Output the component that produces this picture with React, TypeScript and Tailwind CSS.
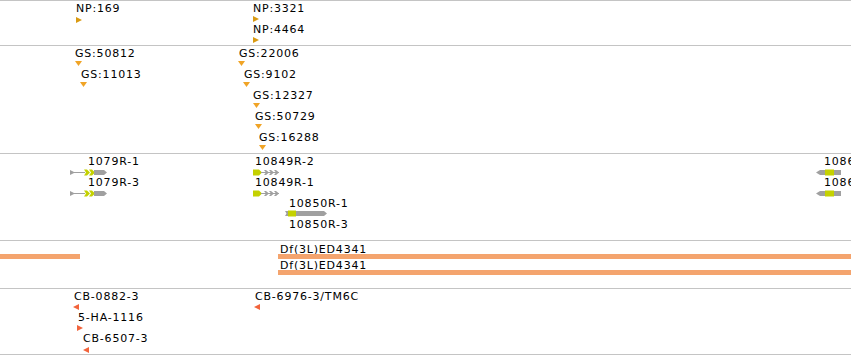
import React from 'react';

const GRAY = '#a0a0a0';
const LIME = '#c4d100';

type Label = { text: string; x: number; cap: number };
type Mark = { kind: 'right' | 'down' | 'left'; x: number; y: number; color: string };

// page y of each track's top border line
const TRACKS = [
  {
    top: 0,
    cls: 'h-[45px] border-t',
    labels: [
      { text: 'NP:169', x: 76, cap: 4.7 },
      { text: 'NP:3321', x: 253, cap: 4.7 },
      { text: 'NP:4464', x: 253, cap: 25 },
    ] as Label[],
    marks: [
      { kind: 'right', x: 76, y: 16.5, color: '#d99a12' },
      { kind: 'right', x: 253, y: 16, color: '#d99a12' },
      { kind: 'right', x: 253, y: 37, color: '#d99a12' },
    ] as Mark[],
  },
  {
    top: 45,
    cls: 'h-[108px] border-t',
    labels: [
      { text: 'GS:50812', x: 75, cap: 49.3 },
      { text: 'GS:11013', x: 81, cap: 70.3 },
      { text: 'GS:22006', x: 239, cap: 49.3 },
      { text: 'GS:9102', x: 244, cap: 70.3 },
      { text: 'GS:12327', x: 253, cap: 91.3 },
      { text: 'GS:50729', x: 255, cap: 112.3 },
      { text: 'GS:16288', x: 259, cap: 133.3 },
    ] as Label[],
    marks: [
      { kind: 'down', x: 75, y: 61, color: '#f0a426' },
      { kind: 'down', x: 80, y: 82, color: '#f0a426' },
      { kind: 'down', x: 238, y: 61, color: '#f0a426' },
      { kind: 'down', x: 243, y: 82, color: '#f0a426' },
      { kind: 'down', x: 253, y: 103, color: '#f0a426' },
      { kind: 'down', x: 255, y: 124, color: '#f0a426' },
      { kind: 'down', x: 259, y: 145, color: '#f0a426' },
    ] as Mark[],
  },
  {
    top: 153,
    cls: 'h-[87px] border-t',
    labels: [
      { text: '1079R-1', x: 88, cap: 157.3 },
      { text: '1079R-3', x: 88, cap: 178.5 },
      { text: '10849R-2', x: 255, cap: 157.3 },
      { text: '10849R-1', x: 255, cap: 178.5 },
      { text: '10850R-1', x: 289, cap: 199.5 },
      { text: '10850R-3', x: 289, cap: 220.3 },
      { text: '10860R-1', x: 824, cap: 157.3 },
      { text: '10860R-3', x: 824, cap: 178.5 },
    ] as Label[],
    marks: [] as Mark[],
  },
  {
    top: 240,
    cls: 'h-[48px] border-t',
    labels: [
      { text: 'Df(3L)ED4341', x: 280, cap: 245 },
      { text: 'Df(3L)ED4341', x: 280, cap: 261 },
    ] as Label[],
    marks: [] as Mark[],
  },
  {
    top: 288,
    cls: 'h-[67px] border-t border-b',
    labels: [
      { text: 'CB-0882-3', x: 74, cap: 292.7 },
      { text: '5-HA-1116', x: 78, cap: 313.5 },
      { text: 'CB-6507-3', x: 83, cap: 334.5 },
      { text: 'CB-6976-3/TM6C', x: 255, cap: 292.7 },
    ] as Label[],
    marks: [
      { kind: 'left', x: 73, y: 304, color: '#f2643c' },
      { kind: 'right', x: 77, y: 325, color: '#f2643c' },
      { kind: 'left', x: 83, y: 346.5, color: '#f2643c' },
      { kind: 'left', x: 254, y: 304, color: '#f2643c' },
    ] as Mark[],
  },
];

function Triangle({ kind, color }: { kind: Mark['kind']; color: string }) {
  const pts =
    kind === 'right' ? '0,0 6,3 0,6' : kind === 'left' ? '6,0 6,6 0,3' : '0,0 7,0 3.5,5';
  return (
    <svg width={7} height={6} viewBox="0 0 7 6" className="block">
      <polygon points={pts} fill={color} />
    </svg>
  );
}

// gene models, drawn at page coordinates in track 3
function Gene1079() {
  return (
    <svg width={38} height={7} viewBox="0 0 38 7" className="block">
      <polygon points="0,1 5,3.5 0,6" fill={GRAY} />
      <rect x={4} y={3} width={11} height={1} fill={GRAY} />
      <polygon points="14,0.5 17,0.5 20,3.5 17,6.5 14,6.5 16,3.5" fill={LIME} />
      <polygon points="19,0.5 22,0.5 25,3.5 22,6.5 19,6.5 21,3.5" fill={LIME} />
      <polygon points="24,1 34,1 37,3.5 34,6 24,6" fill={GRAY} />
    </svg>
  );
}

function Gene10849() {
  return (
    <svg width={28} height={7} viewBox="0 0 28 7" className="block">
      <polygon points="0,0.5 6,0.5 9,3.5 6,6.5 0,6.5" fill={LIME} />
      <rect x={8} y={3} width={18} height={1} fill={GRAY} />
      <polygon points="11,1 13,1 16,3.5 13,6 11,6 13,3.5" fill={GRAY} />
      <polygon points="16,1 18,1 21,3.5 18,6 16,6 18,3.5" fill={GRAY} />
      <polygon points="21,1 23,1 26,3.5 23,6 21,6 23,3.5" fill={GRAY} />
    </svg>
  );
}

function Gene10850() {
  return (
    <svg width={43} height={7} viewBox="0 0 43 7" className="block">
      <polygon points="0,1 3,1 3,6 0,6 1.5,3.5" fill={GRAY} />
      <rect x={3} y={0.5} width={8} height={6} fill={LIME} />
      <polygon points="11,1 39,1 42,3.5 39,6 11,6" fill={GRAY} />
    </svg>
  );
}

function Gene10860() {
  return (
    <svg width={25} height={7} viewBox="0 0 25 7" className="block">
      <polygon points="0,3.5 4,1 10,1 10,6 4,6" fill={GRAY} />
      <rect x={9} y={0.5} width={9} height={6} fill={LIME} />
      <rect x={18} y={1} width={7} height={5} fill={GRAY} />
    </svg>
  );
}

const GENES = [
  { x: 70, y: 169, el: <Gene1079 /> },
  { x: 70, y: 190, el: <Gene1079 /> },
  { x: 253, y: 169, el: <Gene10849 /> },
  { x: 253, y: 190, el: <Gene10849 /> },
  { x: 285, y: 210, el: <Gene10850 /> },
  { x: 816, y: 169, el: <Gene10860 /> },
  { x: 816, y: 190, el: <Gene10860 /> },
];

export default function App() {
  return (
    <div className="w-[851px] h-[355px] overflow-hidden bg-white text-black font-['DejaVu_Sans',sans-serif] text-[11px] leading-[11px] tracking-[0.8px]">
      {TRACKS.map((t, i) => (
        <div key={i} className={`relative border-[#c4c4c4] ${t.cls}`}>
          {t.labels.map((l, j) => (
            <span
              key={j}
              className="absolute whitespace-nowrap"
              style={{ left: l.x, top: l.cap - 1.3 - t.top - 1 }}
            >
              {l.text}
            </span>
          ))}
          {t.marks.map((m, j) => (
            <div key={j} className="absolute" style={{ left: m.x, top: m.y - t.top - 1 }}>
              <Triangle kind={m.kind} color={m.color} />
            </div>
          ))}
          {i === 2 &&
            GENES.map((g, j) => (
              <div key={j} className="absolute" style={{ left: g.x, top: g.y - t.top - 1 }}>
                {g.el}
              </div>
            ))}
          {i === 3 && (
            <>
              <div className="absolute left-0 top-[13px] w-[80px] h-[5px] bg-[#f4a46e]" />
              <div className="absolute left-[278px] right-0 top-[13px] h-[5px] bg-[#f4a46e]" />
              <div className="absolute left-[278px] right-0 top-[29px] h-[5px] bg-[#f4a46e]" />
            </>
          )}
        </div>
      ))}
    </div>
  );
}
